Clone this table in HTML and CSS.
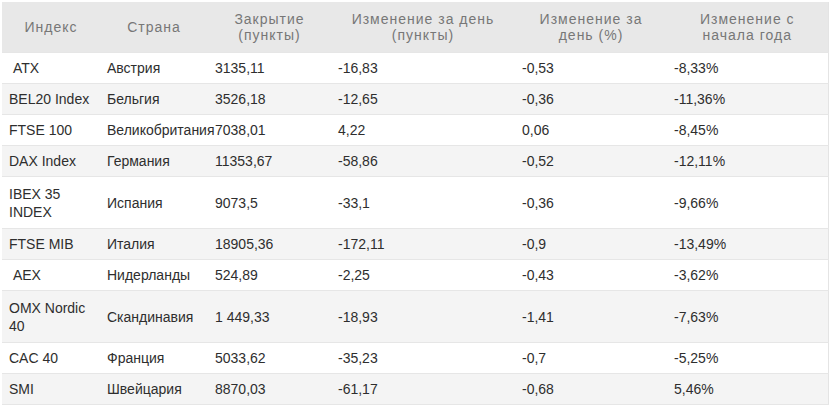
FILE: index.html
```html
<!DOCTYPE html>
<html lang="ru">
<head>
<meta charset="utf-8">
<title>Индексы</title>
<link rel="stylesheet" href="styles.css">
</head>
<body>
<table class="idx">
  <colgroup>
    <col class="c1"><col class="c2"><col class="c3"><col class="c4"><col class="c5"><col class="c6">
  </colgroup>
  <thead>
    <tr>
      <th>Индекс</th>
      <th>Страна</th>
      <th>Закрытие (пункты)</th>
      <th>Изменение за день (пункты)</th>
      <th>Изменение за день (%)</th>
      <th>Изменение с начала года</th>
    </tr>
  </thead>
  <tbody>
    <tr><td>&nbsp;ATX</td><td>Австрия</td><td>3135,11</td><td>-16,83</td><td>-0,53</td><td>-8,33%</td></tr>
    <tr><td>BEL20 Index</td><td>Бельгия</td><td>3526,18</td><td>-12,65</td><td>-0,36</td><td>-11,36%</td></tr>
    <tr><td>FTSE 100</td><td>Великобритания</td><td>7038,01</td><td>4,22</td><td>0,06</td><td>-8,45%</td></tr>
    <tr><td>DAX Index</td><td>Германия</td><td>11353,67</td><td>-58,86</td><td>-0,52</td><td>-12,11%</td></tr>
    <tr class="two"><td>IBEX 35 INDEX</td><td>Испания</td><td>9073,5</td><td>-33,1</td><td>-0,36</td><td>-9,66%</td></tr>
    <tr><td>FTSE MIB</td><td>Италия</td><td>18905,36</td><td>-172,11</td><td>-0,9</td><td>-13,49%</td></tr>
    <tr><td>&nbsp;AEX</td><td>Нидерланды</td><td>524,89</td><td>-2,25</td><td>-0,43</td><td>-3,62%</td></tr>
    <tr class="two"><td>OMX Nordic 40</td><td>Скандинавия</td><td>1 449,33</td><td>-18,93</td><td>-1,41</td><td>-7,63%</td></tr>
    <tr><td>CAC 40</td><td>Франция</td><td>5033,62</td><td>-35,23</td><td>-0,7</td><td>-5,25%</td></tr>
    <tr><td>SMI</td><td>Швейцария</td><td>8870,03</td><td>-61,17</td><td>-0,68</td><td>5,46%</td></tr>
  </tbody>
</table>
</body>
</html>
```
FILE: styles.css
```css
html, body {
  margin: 0;
  padding: 0;
  background: #fff;
}
body {
  padding: 2px 0 0 2px;
  font-family: "Liberation Sans", Arial, sans-serif;
}
.idx {
  width: 826px;
  table-layout: fixed;
  border-collapse: collapse;
  border-right: 1px solid #e4e4e4;
}
.c1 { width: 98px; }
.c2 { width: 108px; }
.c3 { width: 123px; }
.c4 { width: 184px; }
.c5 { width: 152px; }
.c6 { width: 161px; }
.idx th {
  background: #e8e8e8;
  color: #777;
  font-weight: normal;
  font-size: 14px;
  letter-spacing: 1px;
  line-height: 16px;
  padding: 9px 10px;
  text-align: center;
  vertical-align: middle;
  height: 32px;
}
.idx td {
  color: #2e2e2e;
  font-size: 14px;
  line-height: 18px;
  padding: 6px 7px;
  text-align: left;
  vertical-align: middle;
  border-top: 1px solid #e6e6e6;
}
.idx tr.two td {
  padding-top: 7.5px;
  padding-bottom: 7.5px;
}
.idx tbody tr:last-child td {
  border-bottom: 1px solid #e6e6e6;
}
.idx tbody tr:nth-child(even) td {
  background: #f4f4f4;
}
```
